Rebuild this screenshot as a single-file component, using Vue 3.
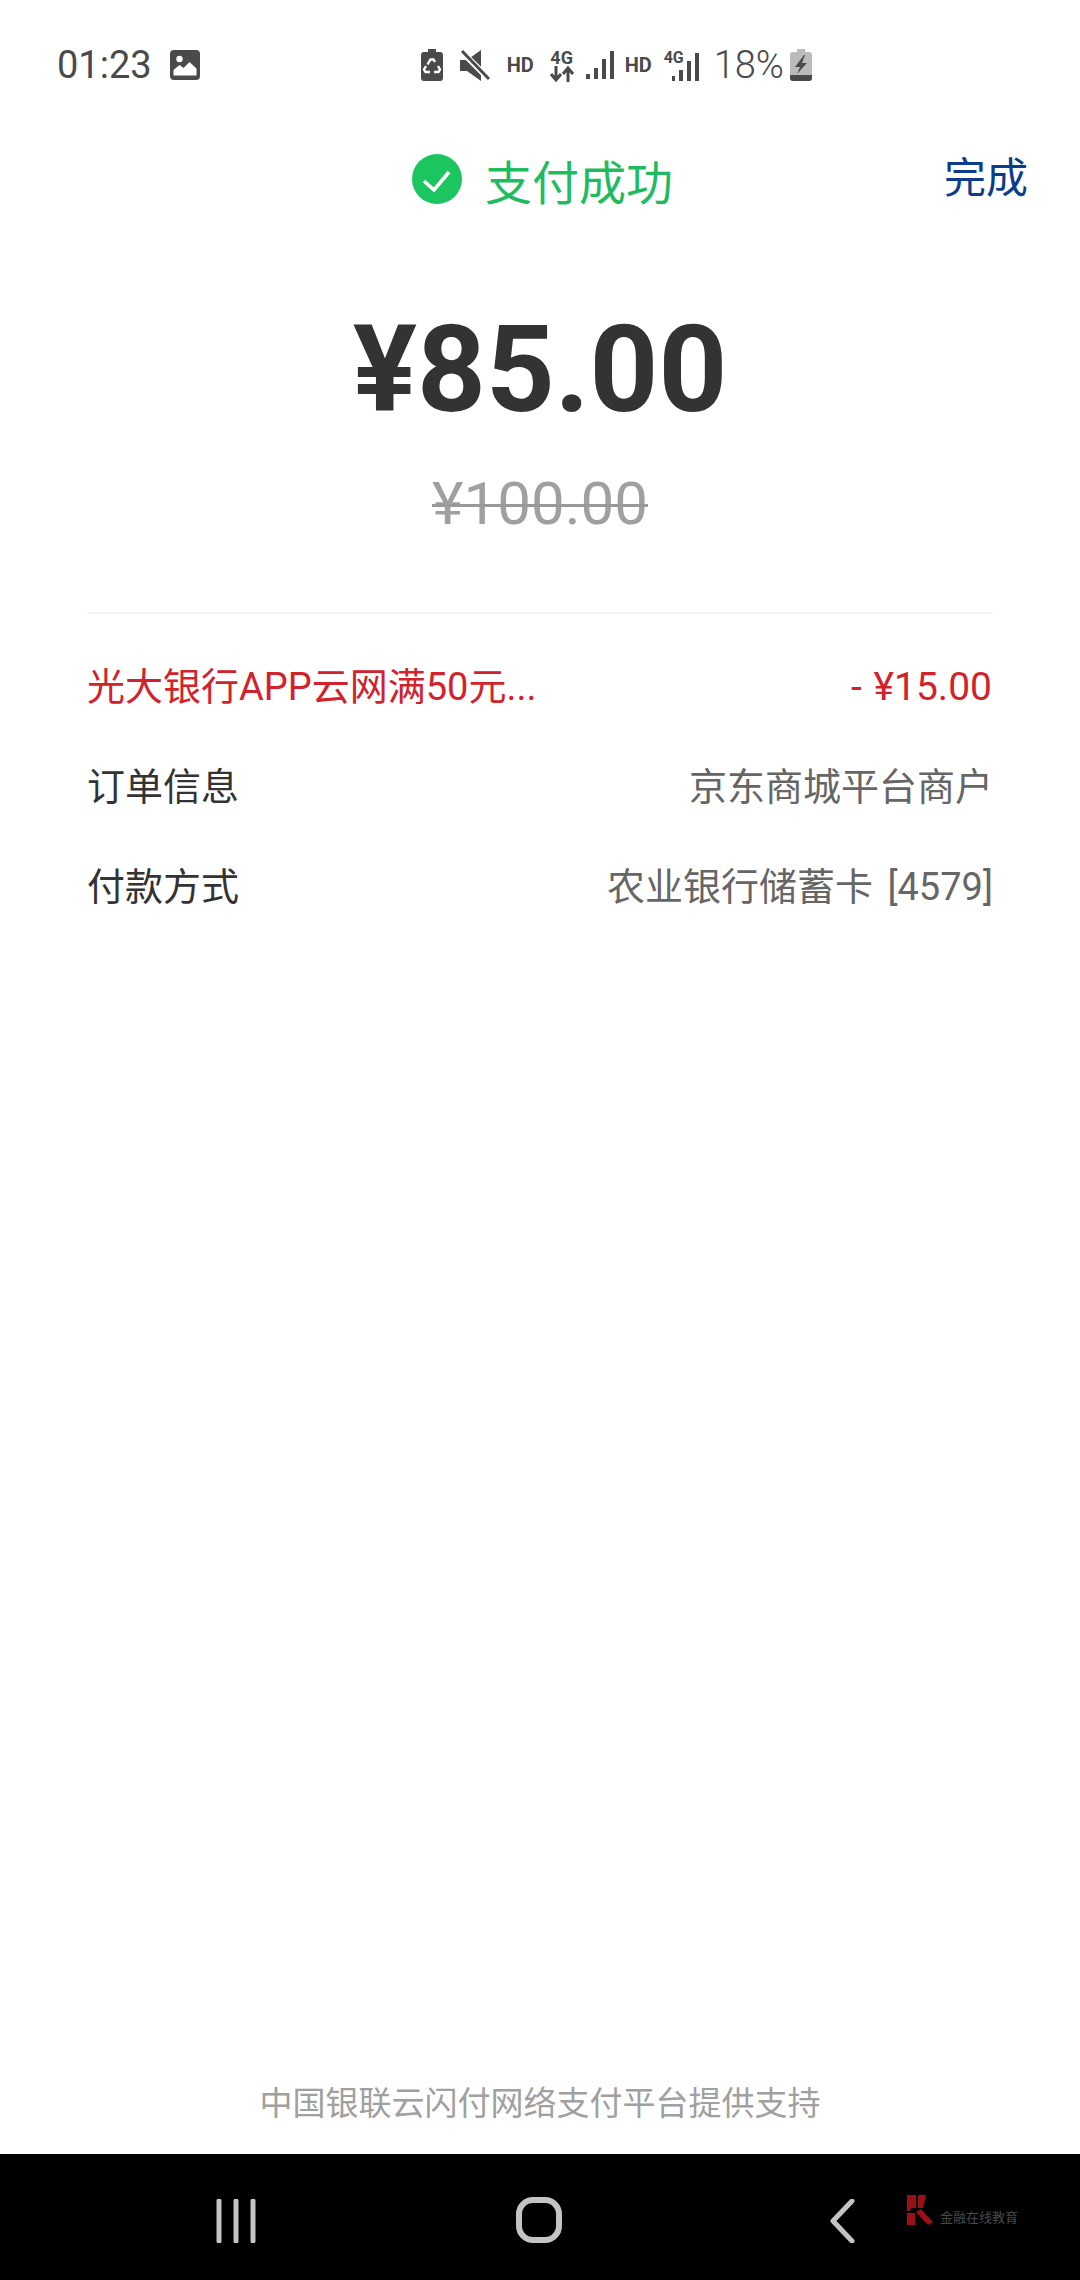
<script setup>
const rows = [
  { label: "光大银行APP云网满50元...", value: "- ¥15.00", promo: true },
  { label: "订单信息", value: "京东商城平台商户" },
  { label: "付款方式", value: "农业银行储蓄卡 [4579]" },
];
</script>

<template>
  <div class="page">
    <div class="status">
      <span class="time">01:23</span>
      <svg class="pic" width="30" height="30" viewBox="0 0 30 30">
        <rect width="30" height="30" rx="4" fill="#4a4a4a" />
        <circle cx="9.500" cy="9" r="3.200" fill="#fff" />
        <path d="M3.500 25.500V20l6-5 4 3 6-6 7 6.500v7z" fill="#fff" />
      </svg>
      <div class="status-right">
        <svg width="22" height="32" viewBox="0 0 22 32">
          <path d="M7 0h8v3h4a3 3 0 0 1 3 3v23a3 3 0 0 1-3 3H3a3 3 0 0 1-3-3V6a3 3 0 0 1 3-3h4z" fill="#4a4a4a" />
          <path d="M6.500 15.500l3-5h3l1.500 2.500M17 17l2 3.500-1.500 2.500H13M9 23H4.500L3 20.500l2-3.500" fill="none" stroke="#fff" stroke-width="2.400" />
        </svg>
        <svg class="mute" width="30" height="31" viewBox="0 0 30 31">
          <path d="M0 10h7L21 0v31L7 21H0z" fill="#4a4a4a" />
          <path d="M0 0l30 30" stroke="#fff" stroke-width="6" />
          <path d="M2 1l27 28" stroke="#4a4a4a" stroke-width="3" />
        </svg>
        <span class="hd first-hd">HD</span>
        <div class="net">
          <span class="four-g">4G</span>
          <svg width="26" height="16" viewBox="0 0 26 16">
            <path d="M7 0v14M2 8l5 6 5-6M19 16V2M14 8l5-6 5 6" fill="none" stroke="#4a4a4a" stroke-width="3" />
          </svg>
        </div>
        <svg class="bars" width="28" height="28" viewBox="0 0 28 28">
          <path d="M0 23h4v5H0zM8 17h4v11H8zM16 8h4v20h-4zM24 0h4v28h-4z" fill="#4a4a4a" />
        </svg>
        <span class="hd">HD</span>
        <div class="net2">
          <span class="four-g small">4G</span>
          <svg width="28" height="28" viewBox="0 0 28 28">
            <path d="M0 23h3v5H0zM7 17h4v11H7zM15 8h4v20h-4zM23 0h4v28h-4z" fill="#4a4a4a" />
          </svg>
        </div>
        <span class="pct">18%</span>
        <svg width="22" height="32" viewBox="0 0 22 32">
          <path d="M7 0h8v3h4a3 3 0 0 1 3 3v23a3 3 0 0 1-3 3H3a3 3 0 0 1-3-3V6a3 3 0 0 1 3-3h4z" fill="#bbb" />
          <path d="M0 26h22v3a3 3 0 0 1-3 3H3a3 3 0 0 1-3-3z" fill="#4a4a4a" />
          <path d="M14 6L5 18h5l-3 7 10-11h-5l3-8z" fill="#4a4a4a" />
        </svg>
      </div>
    </div>

    <div class="title-bar">
      <span></span>
      <div class="title">
        <svg width="50" height="50" viewBox="0 0 50 50">
          <circle cx="25" cy="25" r="25" fill="#1cc65f" />
          <path d="M12 27l10 9 15-18" fill="none" stroke="#fff" stroke-width="3.600" />
        </svg>
        <span>支付成功</span>
      </div>
      <a class="done">完成</a>
    </div>

    <div class="amount">¥85.00</div>
    <div class="origin">¥100.00</div>

    <div class="info">
      <div v-for="row in rows" :key="row.label" class="row" :class="{ promo: row.promo }">
        <span class="label">{{ row.label }}</span>
        <span class="value">{{ row.value }}</span>
      </div>
    </div>

    <div class="spacer"></div>
    <div class="support">中国银联云闪付网络支付平台提供支持</div>

    <div class="nav">
      <svg class="recent" width="40" height="44" viewBox="0 0 40 44">
        <path d="M3 2v40M20 2v40M37 2v40" stroke="#c4c4c4" stroke-width="5" stroke-linecap="round" />
      </svg>
      <svg class="home" width="46" height="46" viewBox="0 0 46 46">
        <rect x="3" y="3" width="40" height="40" rx="14" fill="none" stroke="#c4c4c4" stroke-width="6" />
      </svg>
      <svg class="back" width="26" height="44" viewBox="0 0 26 44">
        <path d="M23 2L4 22l19 20" fill="none" stroke="#c4c4c4" stroke-width="5" stroke-linecap="round" stroke-linejoin="round" />
      </svg>
      <div class="mark">
        <svg width="28" height="30" viewBox="0 0 28 30">
          <path d="M2 0h9v13H6l-1 3H2zM13 0h8l-3 13h-5zM2 18h8v12H2zM11 17l5-3 12 13-5 3z" fill="#9b0f17" />
        </svg>
        <span>金融在线教育</span>
      </div>
    </div>
  </div>
</template>

<style scoped>
.page {
  width: 1080px;
  height: 2280px;
  display: flex;
  flex-direction: column;
  background: #fff;
  font-family: Roboto, "Noto Sans CJK SC", sans-serif;
  color: #333;
}

.status {
  height: 130px;
  display: flex;
  align-items: center;
  padding-left: 57px;
  color: #4a4a4a;
}

.time {
  font-size: 38px;
}

.pic {
  margin-left: 18px;
}

.status-right {
  display: flex;
  align-items: center;
  margin-left: 221px;
}

.mute {
  margin-left: 17px;
}

.hd {
  width: 27px;
  font-size: 20px;
  font-weight: 700;
  margin-left: 11px;
}

.first-hd {
  margin-left: 17px;
}

.net {
  width: 26px;
  margin-left: 15px;
  display: flex;
  flex-direction: column;
  align-items: center;
}

.bars {
  margin-left: 11px;
}

.net2 {
  width: 36px;
  margin-left: 12px;
  display: flex;
  align-items: flex-start;
}

.net2 svg {
  margin: 3px 0 0 -12px;
}

.four-g {
  font-size: 18px;
  font-weight: 700;
  line-height: 17px;
  color: #4a4a4a;
}

.small {
  width: 20px;
  font-size: 16px;
  line-height: 15px;
}

.pct {
  font-size: 38px;
  font-weight: 300;
  margin: 0 6px 0 14px;
}

.title-bar {
  height: 100px;
  display: grid;
  grid-template-columns: 1fr auto 1fr;
  align-items: center;
  padding: 0 52px;
}

.title {
  display: flex;
  align-items: center;
  gap: 23px;
  margin-bottom: 2px;
  padding-left: 5px;
  font-size: 47px;
  color: #1fbb60;
}

.done {
  justify-self: end;
  margin-bottom: 12px;
  font-size: 42px;
  color: #0c3c8c;
}

.amount {
  margin-top: 69px;
  text-align: center;
  font-size: 120px;
  font-weight: 700;
  line-height: 143px;
}

.origin {
  margin-top: 24px;
  text-align: center;
  font-size: 60px;
  line-height: 76px;
  color: #a0a0a0;
  text-decoration: line-through;
  text-decoration-thickness: 3px;
  text-decoration-color: #999;
}

.info {
  margin: 70px 87px 0;
  padding-top: 23px;
  border-top: 2px solid #f3f3f3;
}

.row {
  height: 100px;
  display: flex;
  align-items: center;
  justify-content: space-between;
  font-size: 38px;
  line-height: 56px;
}

.value {
  color: #666;
  word-spacing: 5px;
}

.promo .label,
.promo .value {
  color: #d2222b;
}

.promo .value {
  font-size: 39px;
  word-spacing: 2px;
  padding-right: 1px;
}

.spacer {
  flex: 1;
}

.support {
  margin-bottom: 29px;
  text-align: center;
  font-size: 33px;
  line-height: 42px;
  color: #a0a0a0;
}

.nav {
  height: 126px;
  flex-shrink: 0;
  position: relative;
  display: flex;
  align-items: flex-start;
  background: #000;
}

.recent {
  margin: 45px 0 0 216px;
}

.home {
  margin: 43px 0 0 260px;
}

.back {
  margin: 45px 0 0 267px;
}

.mark {
  position: absolute;
  left: 905px;
  top: 41px;
  display: flex;
  align-items: flex-end;
  gap: 7px;
  font-size: 13px;
  line-height: 14px;
  color: #4a4a4a;
}
</style>
